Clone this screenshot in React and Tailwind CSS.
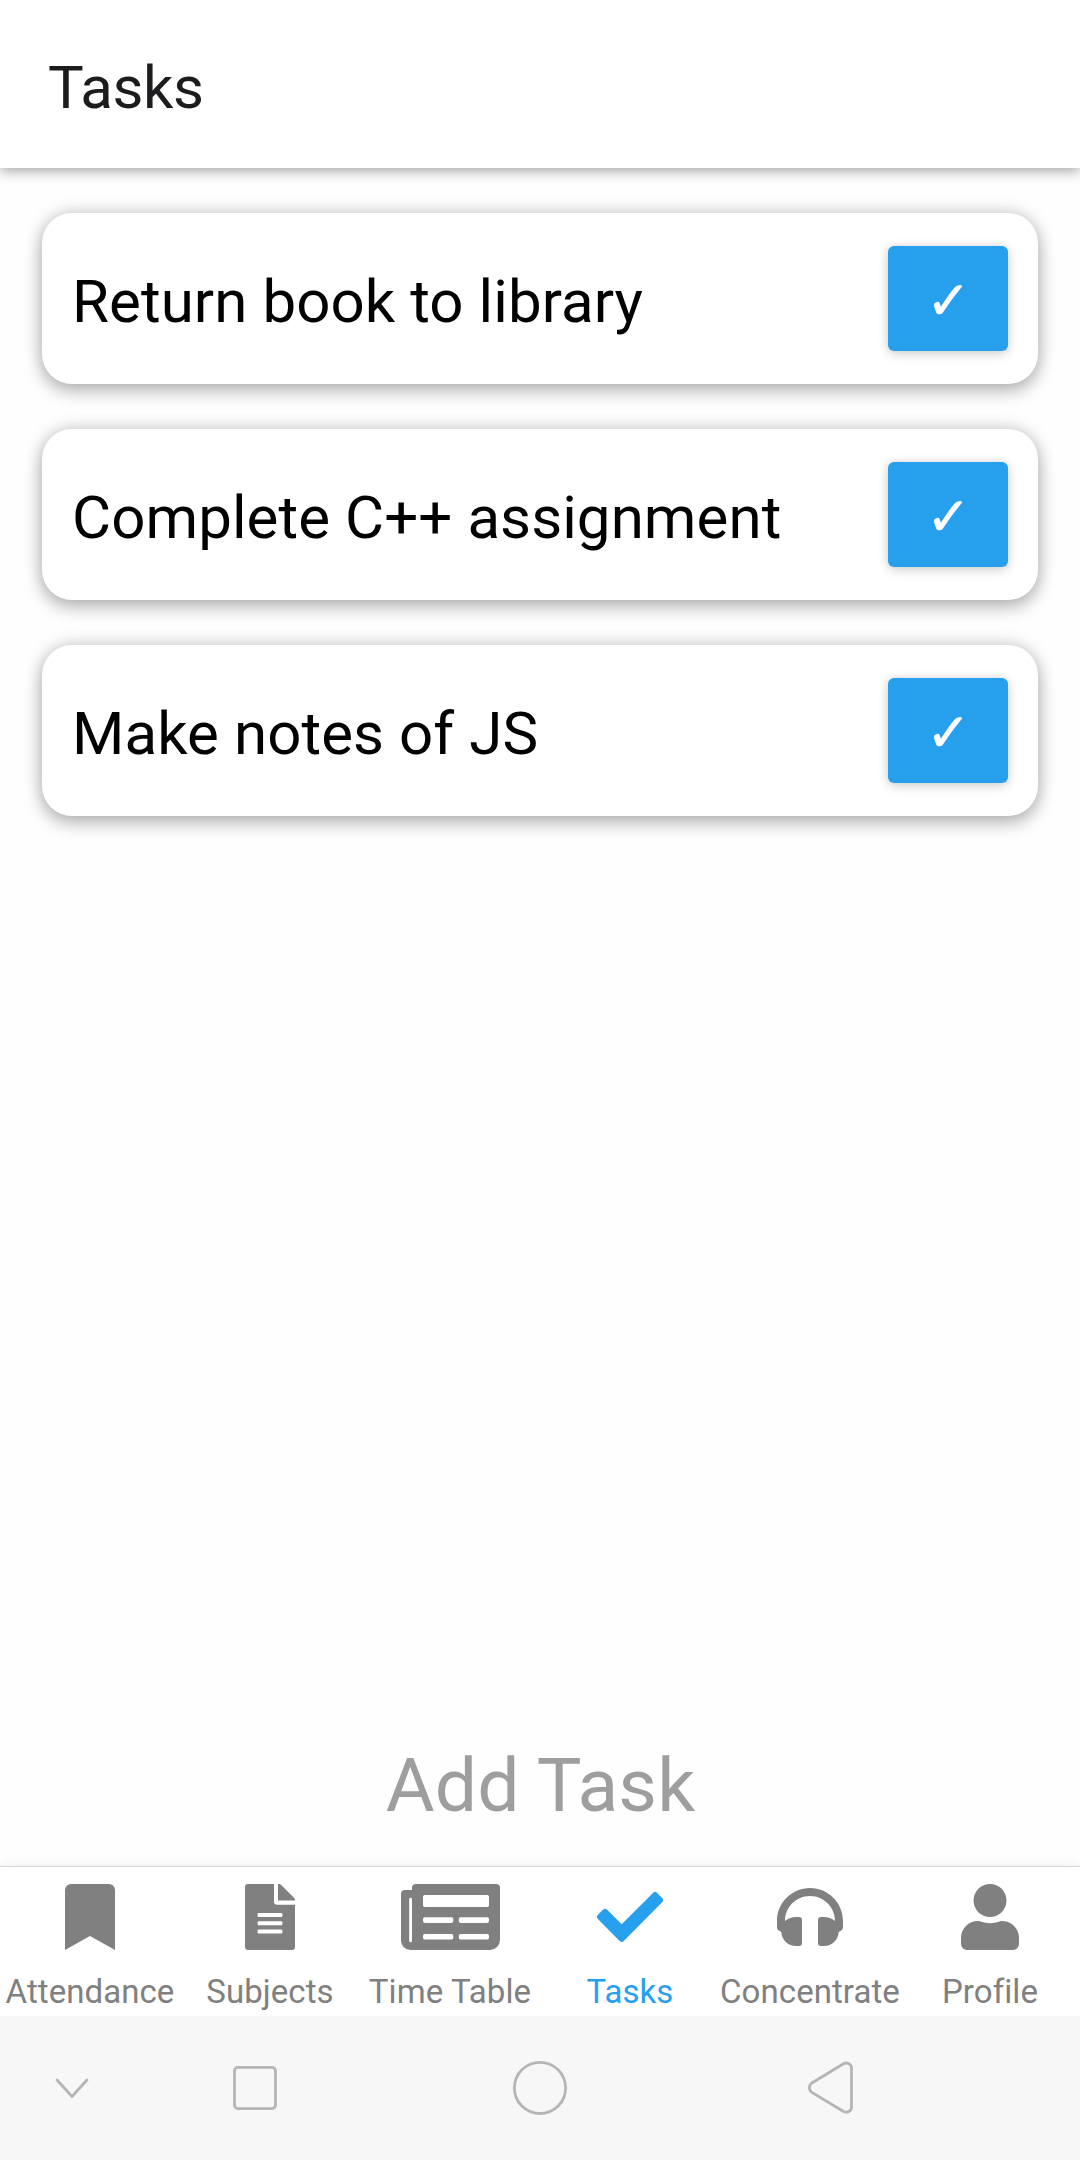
const tasks = ['Return book to library', 'Complete C++ assignment', 'Make notes of JS'];

const BookmarkIcon = () => (
  <svg width="50" height="66" viewBox="0 0 50 66" fill="currentColor">
    <path d="M6 0h38a6 6 0 0 1 6 6v60L25 52 0 66V6a6 6 0 0 1 6-6z" />
  </svg>
);

const FileIcon = () => (
  <svg width="50" height="66" viewBox="0 0 50 66" fill="currentColor">
    <path d="M3 0h26v17.5a3.3 3.3 0 0 0 3.3 3.3H50V63a3 3 0 0 1-3 3H3a3 3 0 0 1-3-3V3a3 3 0 0 1 3-3z" />
    <path d="M33 0h1a3 3 0 0 1 2.2.9l13 13A3 3 0 0 1 50 16v.5H33z" />
    <g fill="white">
      <rect x="12.6" y="29" width="24.8" height="4.1" rx="1.2" />
      <rect x="12.6" y="37.2" width="24.8" height="4.1" rx="1.2" />
      <rect x="12.6" y="45.4" width="24.8" height="4.1" rx="1.2" />
    </g>
  </svg>
);

const NewspaperIcon = () => (
  <svg width="99" height="66" viewBox="0 0 99 66" fill="currentColor">
    <path d="M15 0h80a4 4 0 0 1 4 4v52a10 10 0 0 1-10 10H9.500A9.500 9.500 0 0 1 0 56.500V10a4 4 0 0 1 4-4h7V4a4 4 0 0 1 4-4z" />
    <g fill="white">
      <rect x="8.200" y="13.700" width="2.800" height="44.600" rx="1.400" />
      <rect x="22" y="11" width="66" height="12" rx="1.800" />
      <rect x="22" y="33.300" width="30.300" height="5.600" rx="1.800" />
      <rect x="57.800" y="33.300" width="30.200" height="5.600" rx="1.800" />
      <rect x="22" y="50" width="30.300" height="5.600" rx="1.800" />
      <rect x="57.800" y="50" width="30.200" height="5.600" rx="1.800" />
    </g>
  </svg>
);

const CheckIcon = () => (
  <svg width="66" height="66" viewBox="0 0 66 66" fill="currentColor">
    <path d="M.9 34.900a3 3 0 0 1 0-4.200L6 25.800a3 3 0 0 1 4.200 0L24.700 40.300 56 8.900a3 3 0 0 1 4.200 0l4.900 5.200a3 3 0 0 1 0 4.200L26.800 57a3 3 0 0 1-4.200 0z" />
  </svg>
);

const HeadphonesIcon = () => (
  <svg width="66" height="66" viewBox="0 0 66 66" fill="currentColor">
    <path d="M33 4C14.800 4 0 18.800 0 37v6c0 2 1 3.200 2.500 4l1.800 1C4.800 56 11 62 19 62h3a3 3 0 0 0 3-3V36a3 3 0 0 0-3-3h-3c-4 0-8 1.400-11 4C8 23.200 19.200 12 33 12s25 11.200 25 25c-3-2.600-7-4-11-4h-3a3 3 0 0 0-3 3v23a3 3 0 0 0 3 3h3c8 0 14.200-6 14.700-14l1.800-1c1.500-.8 2.500-2 2.500-4v-6C66 18.800 51.200 4 33 4z" />
  </svg>
);

const PersonIcon = () => (
  <svg width="58" height="66" viewBox="0 0 58 66" fill="currentColor">
    <circle cx="29" cy="16.500" r="16.500" />
    <path d="M17 37c2 0 6 2.200 12 2.200S39 37 41 37c9.500 0 17 7.500 17 17v6a6 6 0 0 1-6 6H6a6 6 0 0 1-6-6v-6c0-9.500 7.500-17 17-17z" />
  </svg>
);

const tabs = [
  { label: 'Attendance', Icon: BookmarkIcon },
  { label: 'Subjects', Icon: FileIcon },
  { label: 'Time Table', Icon: NewspaperIcon },
  { label: 'Tasks', Icon: CheckIcon, active: true },
  { label: 'Concentrate', Icon: HeadphonesIcon },
  { label: 'Profile', Icon: PersonIcon },
];

function TaskCard({ title }) {
  return (
    <li className="flex h-[171px] items-center justify-between rounded-[30px] bg-white pr-[30px] pl-[30px] shadow-[0_0_18px_rgba(0,0,0,0.2),0_8px_18px_rgba(0,0,0,0.21)]">
      <span className="pt-[7px] text-[60px] leading-[70px] tracking-[0.08px] whitespace-nowrap text-black">{title}</span>
      <button
        type="button"
        className="flex h-[105px] w-[120px] items-center justify-center rounded-[6px] bg-[#269fed] pt-[4px] pl-px font-['DejaVu_Sans',sans-serif] text-[53px] leading-none text-white shadow-[0_0_10px_rgba(0,0,0,0.12),0_4px_12px_rgba(0,0,0,0.12)] [-webkit-text-stroke:0.6px_white]"
      >
        ✓
      </button>
    </li>
  );
}

export default function App() {
  return (
    <div className="flex h-[2160px] w-[1080px] flex-col overflow-hidden bg-[#fefefe] font-[Roboto,sans-serif]">
      <header className="z-10 flex h-[168px] shrink-0 items-center bg-white pt-[8px] pl-[48px] shadow-[0_3px_12px_rgba(0,0,0,0.36)]">
        <h1 className="text-[60px] leading-[70px] tracking-[-0.35px] text-[#1c1c1e]">Tasks</h1>
      </header>

      <main className="flex flex-1 flex-col">
        <ul className="flex flex-col gap-[45px] px-[42px] pt-[45px]">
          {tasks.map((title) => (
            <TaskCard key={title} title={title} />
          ))}
        </ul>
        <div className="mt-auto pb-[37px] pl-px text-center text-[75px] leading-[88px] tracking-[0.1px] text-[#9e9e9e]">
          Add Task
        </div>
      </main>

      <nav className="grid h-[150px] shrink-0 grid-cols-6 border-t border-[#d8d8d8] bg-white shadow-[0_0_12px_rgba(0,0,0,0.08)]">
        {tabs.map(({ label, Icon, active }) => (
          <div
            key={label}
            className={
              active
                ? 'flex flex-col items-center pt-[17px] text-[#269fed]'
                : 'flex flex-col items-center pt-[17px] text-[#808080]'
            }
          >
            <Icon />
            <span className="mt-[22px] text-[33px] leading-[39px] tracking-[0.07px] whitespace-nowrap">{label}</span>
          </div>
        ))}
      </nav>

      <footer className="flex h-[144px] shrink-0 items-center bg-[#f7f7f7]">
        <svg width="1080" height="144" viewBox="0 0 1080 144" fill="none" stroke="#b5b5b5" strokeWidth="2.800">
          <path d="M57 64l15 16.500L87 64" strokeLinecap="round" strokeLinejoin="round" />
          <rect x="234.500" y="51.400" width="41" height="41.200" rx="3.500" />
          <circle cx="540" cy="71.900" r="25.600" />
          <path d="M811.500 67.200L843.500 47.700Q846 46.400 848.500 47.500Q851.500 49 851.500 52V91.500Q851.500 94.500 848.500 95.600Q846 96.600 843.500 95.400L811.500 76.200Q809.400 74.500 809.400 71.700Q809.400 69 811.500 67.200Z" />
        </svg>
      </footer>
    </div>
  );
}
